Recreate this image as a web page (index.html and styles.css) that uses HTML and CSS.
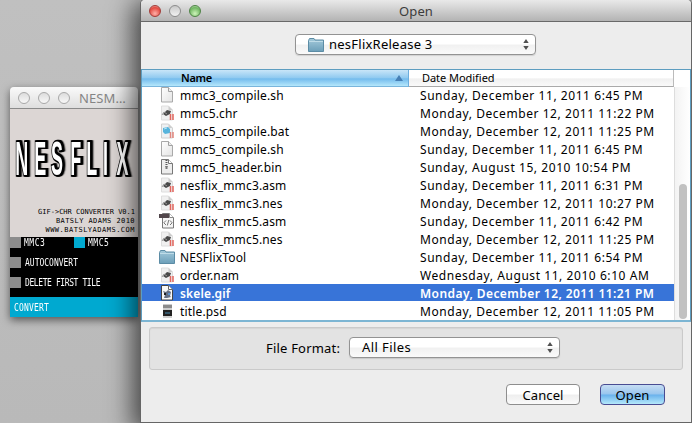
FILE: index.html
```html
<!DOCTYPE html>
<html lang="en">
<head>
<meta charset="utf-8">
<title>Open</title>
<link rel="stylesheet" href="styles.css">
</head>
<body>
<svg class="defs" width="0" height="0">
  <defs>
    <linearGradient id="paper" x1="0" y1="0" x2="1" y2="1"><stop offset="0" stop-color="#fff"/><stop offset="1" stop-color="#e3e3e3"/></linearGradient>
    <linearGradient id="fold" x1="0" y1="0" x2="0" y2="1"><stop offset="0" stop-color="#a4cadb"/><stop offset="1" stop-color="#6c9fb9"/></linearGradient>
    <symbol id="page" viewBox="0 0 16 16"><path d="M2.500 .5h7l4 4v10.500h-11z" fill="url(#paper)" stroke="#a9a9a9"/><path d="M9.500 .5v4h4" fill="#eee" stroke="#a0a0a0"/></symbol>
    <symbol id="chip" viewBox="0 0 16 16"><path d="M2.500 1h7l4 4v10h-11z" fill="#f0f0f0" stroke="#dedede"/><path d="M9.500 1v4h4z" fill="#ccc"/><path d="M4 9l4-4 4 1-1 3-4 2z" fill="#4a4a4a"/><path d="M3 10l2-3 3 2" fill="none" stroke="#999"/><path d="M11.500 9v6M14 9v6" stroke="#e2665e" stroke-width="1.500"/></symbol>
    <symbol id="bat" viewBox="0 0 16 16"><path d="M2.500 1h7l4 4v10h-11z" fill="#eef1f3" stroke="#d0d0d0"/><path d="M9.500 1v4h4z" fill="#ccc"/><path d="M4 5l5-1 2 2v4l-5 1-2-2z" fill="#57b4dc"/><path d="M5 6l3-1" stroke="#b6e3f3"/><path d="M11.500 9v6M14 9v6" stroke="#e2867e" stroke-width="1.500"/></symbol>
    <symbol id="zip" viewBox="0 0 16 16"><path d="M2.500 .5h7l4 4v10.500h-11z" fill="#ededed" stroke="#777"/><path d="M9.500 .5v4h4" fill="#fff" stroke="#777"/><path d="M7.500 1v7" stroke="#555" stroke-width="2" stroke-dasharray="1 1"/><path d="M6.500 7h2v3h-2z" fill="#777"/></symbol>
    <symbol id="code" viewBox="0 0 16 16"><path d="M3.500 .5h7l4 4v10.500h-11z" fill="#f5f5f5" stroke="#777"/><path d="M10.500 .5v4h4" fill="#fff" stroke="#888"/><path d="M0 1h10v4H0z" fill="#51464b"/><path d="M7 7.500L4.800 9.800 7 12M11 7.500l2.200 2.300L11 12M9.800 7l-1.500 5.500" fill="none" stroke="#777"/></symbol>
    <symbol id="folder" viewBox="0 0 16 14"><path d="M.5 2.500L1.500 .5h4.500l1 1.500h8.500v11.500H.5z" fill="url(#fold)" stroke="#5c8ca5"/><path d="M1 3.500h14" stroke="#bfdce8"/></symbol>
    <symbol id="image" viewBox="0 0 16 16"><path d="M2.500 .5h7l4 4v10.500h-11z" fill="#f7f7f7" stroke="#444"/><path d="M9.500 .5v4h4" fill="#fff" stroke="#666"/><path d="M4 6l3 1 2-2 3 2-1 4 1 1-4 1-3 0 1-3z" fill="#656f83"/><path d="M5 8h2v2H5z" fill="#222"/><path d="M9 8h2v2H9z" fill="#5c91cc"/></symbol>
    <symbol id="psd" viewBox="0 0 16 16"><path d="M4 1h9v14H4z" fill="#ccc"/><path d="M4 2h9v3H4z" fill="#8b8b8b"/><path d="M4 7h9v6H4z" fill="#222"/><path d="M6 9h5v2H6z" fill="#35566a"/><path d="M4 13h9v2H4z" fill="#d0d0d0"/></symbol>
    <symbol id="updown" viewBox="0 0 6 11"><path d="M3 0l2.700 4H.3zM3 11L.3 7h5.400z" fill="#505050"/></symbol>
  </defs>
</svg>

<main class="desktop">
  <section class="tool">
    <header class="tool-bar"><i></i><i></i><i></i><span>NESM…</span></header>
    <div class="banner">
      <svg class="logo" width="122" height="56" viewBox="0 0 122 56">
        <g transform="scale(.64 1.75)"><text x="2 31.500 58 88 113 139 160" y="27.700">NESFLIX</text></g>
      </svg>
      <p class="c1">GIF-&gt;CHR CONVERTER V0.1</p>
      <p class="c2">BATSLY ADAMS 2010</p>
      <p class="c3">WWW.BATSLYADAMS.COM</p>
    </div>
    <div class="options">
      <div class="opt first"><b></b><span>MMC3</span><b class="on"></b><span>MMC5</span></div>
      <div class="opt"><b></b><span>AUTOCONVERT</span></div>
      <div class="opt"><b></b><span>DELETE FIRST TILE</span></div>
    </div>
    <div class="convert"><span>CONVERT</span></div>
  </section>

  <section class="dialog">
    <header class="title"><i class="red"></i><i></i><i class="green"></i><h1>Open</h1></header>
    <div class="path"><div class="select location"><svg width="16" height="14"><use href="#folder"/></svg><span>nesFlixRelease 3</span><svg class="arrows" width="6" height="11"><use href="#updown"/></svg></div></div>
    <div class="list">
      <div class="head"><div class="col-name">Name<svg width="8" height="6"><path d="M4 0l4 6H0z" fill="#467fb5"/></svg></div><div class="col-date">Date Modified</div></div>
      <div class="body">
        <div class="rows">
          <div class="row"><svg><use href="#page"/></svg><span>mmc3_compile.sh</span><time>Sunday, December 11, 2011 6:45 PM</time></div>
          <div class="row"><svg><use href="#chip"/></svg><span>mmc5.chr</span><time>Monday, December 12, 2011 11:22 PM</time></div>
          <div class="row"><svg><use href="#bat"/></svg><span>mmc5_compile.bat</span><time>Monday, December 12, 2011 11:25 PM</time></div>
          <div class="row"><svg><use href="#page"/></svg><span>mmc5_compile.sh</span><time>Sunday, December 11, 2011 6:45 PM</time></div>
          <div class="row"><svg><use href="#zip"/></svg><span>mmc5_header.bin</span><time>Sunday, August 15, 2010 10:54 PM</time></div>
          <div class="row"><svg><use href="#chip"/></svg><span>nesflix_mmc3.asm</span><time>Sunday, December 11, 2011 6:31 PM</time></div>
          <div class="row"><svg><use href="#chip"/></svg><span>nesflix_mmc3.nes</span><time>Monday, December 12, 2011 10:27 PM</time></div>
          <div class="row"><svg><use href="#code"/></svg><span>nesflix_mmc5.asm</span><time>Sunday, December 11, 2011 6:42 PM</time></div>
          <div class="row"><svg><use href="#chip"/></svg><span>nesflix_mmc5.nes</span><time>Monday, December 12, 2011 11:25 PM</time></div>
          <div class="row"><svg><use href="#folder"/></svg><span>NESFlixTool</span><time>Sunday, December 11, 2011 6:54 PM</time></div>
          <div class="row"><svg><use href="#chip"/></svg><span>order.nam</span><time>Wednesday, August 11, 2010 6:10 AM</time></div>
          <div class="row selected"><svg><use href="#image"/></svg><span>skele.gif</span><time>Monday, December 12, 2011 11:21 PM</time></div>
          <div class="row"><svg><use href="#psd"/></svg><span>title.psd</span><time>Monday, December 12, 2011 11:05 PM</time></div>
        </div>
        <div class="scroll"><div class="thumb"></div></div>
      </div>
    </div>
    <div class="format"><label>File Format:</label><div class="select kind"><span>All Files</span><svg class="arrows" width="6" height="11"><use href="#updown"/></svg></div></div>
    <footer class="actions"><button>Cancel</button><button class="primary">Open</button></footer>
  </section>
</main>
</body>
</html>
```

FILE: styles.css
```css
* { box-sizing: border-box; }
body { margin: 0; font: 13px "Noto Sans", "Open Sans", sans-serif; color: #000; }
h1, p { margin: 0; }
.defs { position: absolute; }
.desktop { display: flex; align-items: flex-start; width: 692px; height: 423px; overflow: hidden; background: linear-gradient(#c0c0c0, #b9b9b9); }

.tool { width: 128px; height: 230px; margin: 87px 3px 0 10px; border-radius: 4px 4px 0 0; box-shadow: 0 3px 8px rgba(0,0,0,.55); flex: none; }
.tool-bar { display: flex; align-items: center; height: 22px; padding-left: 8px; background: linear-gradient(#fafafa, #dedede); border-bottom: 1px solid #8a8a8a; border-radius: 4px 4px 0 0; }
.tool-bar i { width: 12px; height: 12px; margin-right: 8px; border: 1px solid #a8a8a8; border-radius: 50%; background: linear-gradient(#dcdcdc, #f8f8f8); }
.tool-bar span { margin-left: 1px; color: #858585; letter-spacing: .1px; white-space: nowrap; }
.banner { height: 128px; padding: 18px 3px 0 0; background: #dcd6d4; text-align: right; font: 7px/9px "DejaVu Sans Mono", monospace; color: #000; }
.logo { display: block; margin: 0 0 25px 4px; overflow: visible; }
.logo text { font: bold 28px "Liberation Sans", sans-serif; fill: #fff; stroke: #000; stroke-width: 2px; paint-order: stroke; filter: drop-shadow(2.5px .5px 0 #000) drop-shadow(2.5px .8px 0 #000); }
.c1 { letter-spacing: 0; }
.c2 { letter-spacing: .44px; }
.c3 { letter-spacing: .5px; }
.options { height: 60px; background: #000; }
.opt { display: flex; align-items: center; height: 20px; color: #fff; }
.opt.first { height: 15px; align-items: flex-start; }
.opt b { width: 11px; height: 11px; margin-right: 4px; background: #8c8c8c; }
.opt.first b { margin-right: 3px; }
.opt b.on { margin-left: 28px; background: #00a9d0; }
.opt span, .convert span { font: 8px/10px "DejaVu Sans Mono", monospace; letter-spacing: -.4px; transform: scaleY(1.25); white-space: nowrap; }
.opt.first span { margin-top: 1px; letter-spacing: .5px; width: 22px; }
.opt:nth-child(n+2) { padding-top: 1px; }
.opt:nth-child(2) span { letter-spacing: 0; }
.convert { display: flex; align-items: center; height: 20px; padding-left: 4px; background: #00a9d0; color: #fff; }
.convert span { margin-top: 1px; letter-spacing: .2px; }

.dialog { position: relative; flex: none; width: 550px; height: 422px; background: #ededed; box-shadow: 0 0 0 1px #666, -4px 6px 26px 4px rgba(0,0,0,.65); border-radius: 4px 4px 0 0; }
.title { display: flex; align-items: center; height: 22px; padding-left: 8px; background: linear-gradient(#e9e9e9, #b3b3b3); border-bottom: 1px solid #696969; border-radius: 4px 4px 0 0; }
.title i { width: 12px; height: 12px; margin-right: 8px; border: 1px solid #8c8c8c; border-radius: 50%; background: linear-gradient(#c9c9c9, #f2f2f2); }
.title i.red { border-color: #a23c38; background: radial-gradient(circle at 50% 75%, #ffb0a8, #e2483f 65%, #f3cdca); }
.title i.green { border-color: #4f8446; background: radial-gradient(circle at 50% 75%, #cdf4ba, #6fb561 65%, #d9efd3); }
.title h1 { flex: 1; margin-right: 68px; text-align: center; font-size: 13px; font-weight: 400; letter-spacing: .1px; color: #3c3c3c; }
.path { display: flex; height: 47px; padding: 12px 0 0 154px; }
.select { display: flex; align-items: center; height: 21px; border: 1px solid #939393; border-radius: 4px; background: linear-gradient(#fff 0 45%, #f1f1f1 55%, #fafafa); box-shadow: 0 1px 1px rgba(0,0,0,.12); }
.arrows { margin-left: auto; margin-right: 6px; }
.location { width: 241px; padding-left: 12px; letter-spacing: .24px; }
.location span { margin: -2px 0 0 5px; }
.list { height: 253px; border: 1px solid #5d9dc0; border-bottom: 2px solid #7cb5d3; background: #fff; }
.head { display: flex; height: 17px; font-size: 11px; line-height: 16px; }
.col-name { display: flex; align-items: center; width: 267px; padding: 0 5px 0 39px; justify-content: space-between; font-weight: 600; letter-spacing: -.3px; border-right: 1px solid #6caede; border-bottom: 1px solid #79b5dc; background: linear-gradient(#c9e5f8, #8fc9f0 50%, #73bbed 55%, #b5e7fb); }
.col-date { width: 265px; padding-left: 13px; letter-spacing: -.04px; border-right: 1px solid #bbb; border-bottom: 1px solid #aaa; background: linear-gradient(#fff 50%, #f0f0f0 55%, #fafafa); }
.body { display: flex; height: 233px; overflow: hidden; }
.rows { width: 532px; margin-top: -1px; }
.row { display: flex; align-items: center; height: 18px; font-size: 12px; line-height: 17px; padding-left: 17px; border-bottom: 1px solid transparent; background-clip: padding-box; }
.row svg { width: 16px; height: 16px; flex: none; }
.row span { width: 240px; margin-left: 5px; letter-spacing: .16px; white-space: nowrap; }
.row span, .row time { padding-top: 1px; }
.row time { letter-spacing: .56px; white-space: nowrap; }
.selected { background-color: #3874d8; color: #fff; font-weight: 600; }
.selected time { letter-spacing: .43px; }
.selected span { letter-spacing: .15px; }
.scroll { flex: 1; padding: 97px 0 0 4px; border-left: 1px solid #ddd; background: linear-gradient(90deg, #f3f3f3, #fff); }
.thumb { width: 8px; height: 135px; border-radius: 4px; background: #c1c1c1; }
.format { display: flex; align-items: center; width: 534px; height: 43px; margin: 5px 0 0 8px; padding: 0 0 2px 116px; border: 1px solid #cacaca; border-radius: 3px; background: #e3e3e3; box-shadow: inset 0 1px 1px #d4d4d4; }
.format label { width: 83px; white-space: nowrap; letter-spacing: .2px; }
.kind { width: 211px; padding-left: 12px; letter-spacing: .4px; }
.kind span { margin-top: -2px; }
.actions { display: flex; padding: 14px 0 0 365px; }
.actions button { width: 74px; height: 21px; padding: 0; border: 1px solid #8e8e8e; border-radius: 4px; background: linear-gradient(#fff 0 45%, #efefef 55%, #fafafa); font: 13px "Noto Sans", sans-serif; line-height: 18px; letter-spacing: .1px; }
.actions .primary { width: 65px; margin-left: 20px; border-color: #494c92; background: linear-gradient(#c6ddf3, #98c5ee 48%, #69b1ec 52%, #b5e9fb); }
```
